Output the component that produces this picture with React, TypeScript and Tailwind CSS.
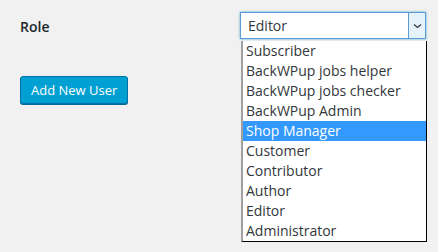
import React from 'react';

const roles = [
  'Subscriber',
  'BackWPup jobs helper',
  'BackWPup jobs checker',
  'BackWPup Admin',
  'Shop Manager',
  'Customer',
  'Contributor',
  'Author',
  'Editor',
  'Administrator',
];

const App: React.FC = () => {
  const highlighted = 'Shop Manager';

  return (
    <div
      className="w-[438px] h-[252px] bg-[#f1f1f1] flex text-[#23282d] overflow-hidden"
      style={{ fontFamily: '"Open Sans", "Noto Sans", sans-serif' }}
    >
      {/* left column */}
      <div className="w-[240px] pl-[20px] pt-[17px] flex flex-col">
        <div className="text-[14px] font-semibold leading-[20px]">Role</div>
        <div className="mt-[39px]">
          <button className="h-[28px] px-[10px] rounded-[3px] bg-[#00a0d2] border border-[#0073aa] text-white text-[13px] leading-[26px] shadow-[0_1px_0_#006799]">
            Add New User
          </button>
        </div>
      </div>

      {/* select */}
      <div className="pt-[12px] relative">
        <div className="w-[186px] h-[27px] bg-white border border-[#5b9dd9] shadow-[0_0_2px_rgba(30,140,190,0.8)] flex items-stretch">
          <div className="flex-1 pl-[7px] text-[14px] leading-[25px] text-[#32373c]">Editor</div>
          <div className="w-[17px] bg-[#e5f1fb] border-l border-[#5b9dd9] flex items-center justify-center">
            <svg width="9" height="6" viewBox="0 0 9 6">
              <path d="M1 1.5 L4.5 4.5 L8 1.5" fill="none" stroke="#333" strokeWidth="1.2" />
            </svg>
          </div>
        </div>

        {/* dropdown list */}
        <ul className="absolute left-[1px] top-[41px] w-[186px] bg-white border-l-2 border-l-[#a0a0a0] border-r border-b border-r-black border-b-black">
          {roles.map((r) => (
            <li
              key={r}
              className={`h-[20px] pl-[3px] text-[14px] leading-[20px] whitespace-nowrap ${
                r === highlighted ? 'bg-[#3399ff] text-white' : 'text-[#32373c]'
              }`}
            >
              {r}
            </li>
          ))}
        </ul>
      </div>
    </div>
  );
};

export default App;
